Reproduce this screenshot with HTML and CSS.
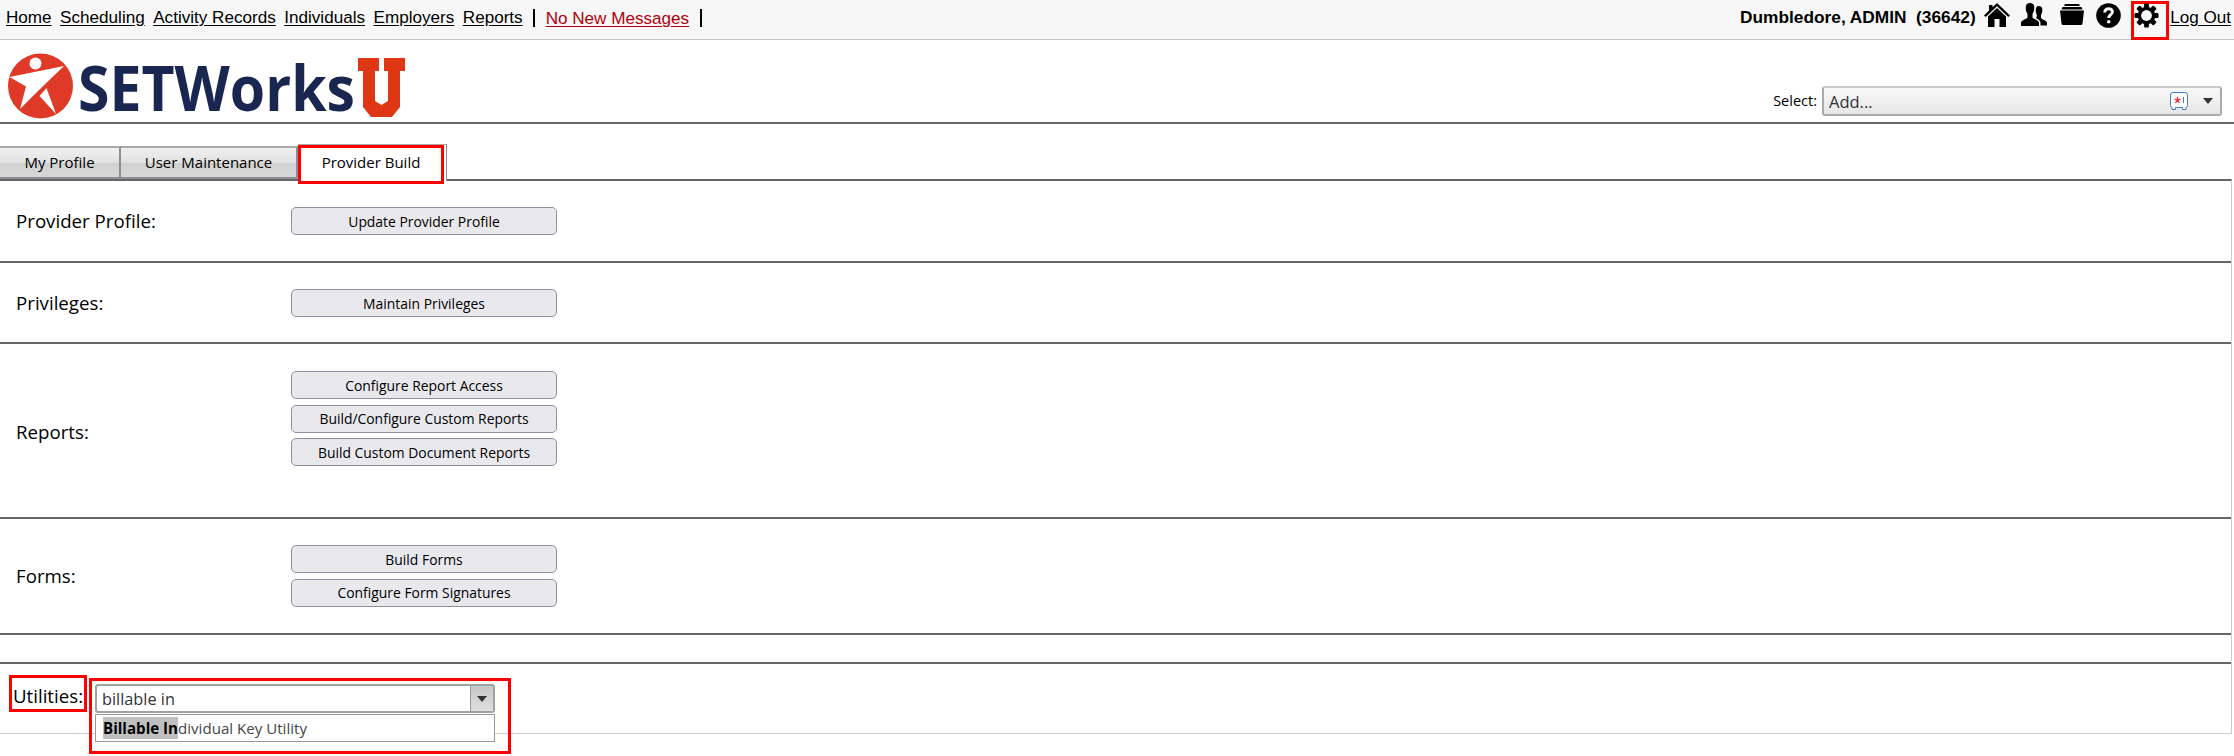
FILE: index.html
```html
<!DOCTYPE html>
<html lang="en">
  <head>
    <meta charset="UTF-8" />
    <meta name="viewport" content="width=device-width, initial-scale=1.0" />
    <title>Provider Build</title>
    <link rel="stylesheet" href="styles.css">
  </head>
  <body>
    <header class="topbar">
      <nav class="nav">
        <a href="#">Home</a>
        <a href="#">Scheduling</a>
        <a href="#">Activity Records</a>
        <a href="#">Individuals</a>
        <a href="#">Employers</a>
        <a href="#">Reports</a>
        <span class="bar"></span>
        <a href="#" class="messages">No New Messages</a>
        <span class="bar"></span>
      </nav>
      <div class="user">
        <span class="user-name">Dumbledore, ADMIN&nbsp; (36642)</span>
        <span class="icons">
          <svg width="26" height="24" viewBox="0 0 26 24"><path d="M13 0 L26 12.5 L24.3 14 L13 3.3 L1.7 14 L0 12.5 L5 7.6 V2 H8.5 V4.3 Z M13 5 L22 13.5 V24 H15.5 V16 H10.5 V24 H4 V13.5 Z" /></svg>
          <svg width="26" height="24" viewBox="0 0 26 24"><path d="M9 0 C12.5 0 13.6 2.6 13.2 6 C13 8.5 12 10 11.5 11 V14.5 C13 16.5 18 17 18 20 V23 H0 V20 C0 17 5 16.5 6.5 14.5 V11 C6 10 5 8.5 4.8 6 C4.4 2.6 5.5 0 9 0 Z M17.5 3 C20.6 3 21.7 5 21.3 8 C21.1 10 20.4 11 20 12 V15 C21.5 17 26 17.5 26 20 V22.5 H19.5 V20 C19.5 17.5 16.5 16 15 15 C16 13.5 16 12.5 15.6 11.5 C14.5 9 14 3 17.5 3 Z" /></svg>
          <svg width="26" height="24" viewBox="0 0 26 24"><path d="M6 1 H20 L21 3 H5 Z M3.5 4 H22.5 L23.5 6.5 H2.500 Z M1 7.500 H25 L23.500 20.500 Q23.300 22 22 22 H4 Q2.700 22 2.500 20.500 Z" /></svg>
          <svg width="25" height="25" viewBox="0 0 25 25"><circle cx="12.5" cy="12.5" r="12.3" /><path class="question" d="M8.700 9.500 C8.700 4.300 16.600 4.600 16.400 9 C16.200 11.500 12.700 12 12.700 15" /><circle class="dot" cx="12.700" cy="18.800" r="1.800" /></svg>
        </span>
        <span class="gear">
          <svg width="25" height="25" viewBox="-13 -13 26 26">
            <rect x="-2.5" y="-12.5" width="5" height="25" rx="1" />
            <rect x="-2.5" y="-12.5" width="5" height="25" rx="1" transform="rotate(45)" />
            <rect x="-2.5" y="-12.5" width="5" height="25" rx="1" transform="rotate(90)" />
            <rect x="-2.5" y="-12.5" width="5" height="25" rx="1" transform="rotate(135)" />
            <circle r="9.2" />
            <circle class="hole" r="5.6" />
          </svg>
        </span>
        <a href="#">Log Out</a>
      </div>
    </header>

    <div class="brand">
      <svg class="logo" width="400" height="70" viewBox="0 0 400 70">
        <circle class="logo-red" cx="32.5" cy="33" r="32.5" />
        <path class="logo-white" d="M56 13 L1.5 24 L18 33.5 L12 56 L31 37 Z M38.5 35 L31.5 43 L48 61 Z" />
        <circle class="logo-white" cx="27.5" cy="10.5" r="6" />
        <text class="logo-text" x="70" y="57.5" textLength="277" lengthAdjust="spacingAndGlyphs">SETWorks</text>
        <path class="logo-u" d="M350 5 H371 V18 H367 V48 L373.5 52 L380 48 V18 H376 V5 H397 V18 H392 V54 L384 64 H363 L355 54 V18 H350 Z" />
      </svg>
      <label class="select-area">
        <span>Select:</span>
        <span class="add-select">
          <span>Add...</span>
          <svg width="18" height="18" viewBox="0 0 18 18"><path class="pass" d="M3 .5 H15 Q17.500 .5 17.500 3 V13.500 Q17.500 15.500 16 15.500 V17.500 H12.500 V15.500 H5.500 V17.500 H2 V15.500 Q.5 15.500 .5 13.500 V3 Q.5 .5 3 .5 Z" /><path class="star" d="M7.500 4.700 V8 M4.300 7 L7.500 8 L10.700 7 M5.500 11 L7.500 8 L9.500 11" /><path class="pass" d="M13.500 5 V11" /></svg>
          <i class="arrow"></i>
        </span>
      </label>
    </div>

    <div class="tabs">
      <a class="tab tab-profile">My Profile</a>
      <a class="tab tab-users">User Maintenance</a>
      <a class="tab active"><span>Provider Build</span></a>
    </div>

    <main class="panel">
      <section class="row row-profile">
        <h2>Provider Profile:</h2>
        <div class="buttons">
          <button>Update Provider Profile</button>
        </div>
      </section>
      <section class="row row-privileges">
        <h2>Privileges:</h2>
        <div class="buttons">
          <button>Maintain Privileges</button>
        </div>
      </section>
      <section class="row row-reports">
        <h2>Reports:</h2>
        <div class="buttons">
          <button>Configure Report Access</button>
          <button>Build/Configure Custom Reports</button>
          <button>Build Custom Document Reports</button>
        </div>
      </section>
      <section class="row row-forms">
        <h2>Forms:</h2>
        <div class="buttons">
          <button>Build Forms</button>
          <button>Configure Form Signatures</button>
        </div>
      </section>
      <section class="row row-empty"></section>
      <section class="utilities">
        <h2>Utilities:</h2>
        <div class="combo-mark">
          <div class="combo">
            <span class="combo-text">billable in</span>
            <span class="combo-btn"><i class="arrow"></i></span>
          </div>
          <div class="combo-list"><span><b>Billable In</b>dividual Key Utility</span></div>
        </div>
      </section>
    </main>
  </body>
</html>
```
FILE: styles.css
```css
* {
  box-sizing: border-box;
}
body {
  margin: 0;
  height: 756px;
  overflow: hidden;
  background-color: white;
  color: black;
  font-family: "Open Sans", sans-serif;
}
a {
  color: black;
}
svg {
  display: block;
}
.topbar {
  display: flex;
  justify-content: space-between;
  height: 40px;
  background-color: #f7f7f7;
  border-bottom: 1px solid #c8c8c8;
  font-family: "Liberation Sans", Arial, sans-serif;
  font-size: 17.1px;
  white-space: nowrap;
}
.nav {
  display: flex;
  align-items: flex-start;
  gap: 8.5px;
  padding: 8px 0 0 6px;
  line-height: 19px;
}
.nav a,
.user > a {
  text-underline-offset: 2px;
}
.bar {
  width: 2px;
  height: 18px;
  margin: 1px 2px 0 2px;
  background-color: black;
}
.nav .messages {
  color: #b0000c;
  padding-top: 1px;
}
.user {
  display: flex;
  align-items: flex-start;
  line-height: 19px;
}
.user-name {
  padding-top: 8px;
  font-size: 17.3px;
  font-weight: bold;
}
.icons {
  display: flex;
  gap: 11.5px;
  padding: 3px 0 0 8px;
}
.question {
  fill: none;
  stroke: #f7f7f7;
  stroke-width: 3;
}
.dot,
.hole {
  fill: #f7f7f7;
}
.gear {
  width: 38px;
  height: 39px;
  margin: 1px 1px 0 10px;
  border: 3px solid red;
}
.gear svg {
  margin-top: -1px;
}
.user > a {
  padding: 8px 3px 0 0;
}
.brand {
  display: flex;
  justify-content: space-between;
  height: 84px;
  padding: 13px 12px 0 8px;
  border-bottom: 2px solid #666;
}
.logo {
  overflow: visible;
}
.logo-red {
  fill: #df3a27;
}
.logo-white {
  fill: white;
}
.logo-u {
  fill: #df3715;
}
.logo-text {
  fill: #182650;
  font-family: "Open Sans", sans-serif;
  font-size: 62px;
  font-weight: 700;
}
.select-area {
  display: flex;
  align-items: center;
  gap: 5px;
  height: 30px;
  margin-top: 33px;
  font-size: 14.5px;
}
.select-area > span:first-child {
  margin-top: -2px;
}
.add-select {
  display: flex;
  align-items: center;
  width: 400px;
  height: 30px;
  padding: 0 7px 0 5px;
  border: 2px solid #aaa;
  border-top-color: #c9c9c9;
  border-radius: 3px;
  background: linear-gradient(#f9f9f9, #e6e6e6);
  color: #333;
  font-size: 16.5px;
}
.add-select svg {
  margin-left: auto;
  margin-right: 15px;
}
.pass {
  fill: white;
  stroke: #3b82c4;
}
.star {
  fill: none;
  stroke: #e3323c;
  stroke-width: 1.3;
}
.arrow {
  border: 5px solid transparent;
  border-top: 6px solid #333;
  border-bottom: 0;
}
.tabs {
  display: flex;
  align-items: flex-end;
  height: 55px;
}
.tab {
  display: flex;
  align-items: center;
  justify-content: center;
  height: 33px;
  padding-bottom: 2px;
  border: 2px solid #8b8d94;
  border-left: 0;
  border-top-color: #aaa;
  background: linear-gradient(#f0f0f0 0%, #e2e2e2 50%, #d0d0d0 51%, #d8d8d8 100%);
  font-size: 15px;
}
.tab-profile {
  width: 121px;
}
.tab-users {
  width: 177px;
}
.active {
  width: 149px;
  height: 37px;
  margin-bottom: -2px;
  align-items: flex-start;
  justify-content: flex-start;
  border-width: 1px;
  border-bottom: 0;
  background: white;
}
.active span {
  width: 146px;
  height: 39px;
  flex: none;
  border: 3px solid red;
  text-align: center;
  line-height: 29px;
}
.panel {
  width: 2232px;
  height: 555px;
  border-top: 2px solid #666;
  border-right: 1px solid #ccc;
  border-bottom: 1px solid #ccc;
}
.row {
  display: flex;
  align-items: flex-start;
  border-bottom: 2px solid #666;
  padding-left: 16px;
}
h2 {
  width: 275px;
  margin: 0;
  font-size: 18.7px;
  font-weight: normal;
  line-height: 28px;
  white-space: nowrap;
}
.buttons {
  display: flex;
  flex-direction: column;
  gap: 5.6px;
}
button {
  width: 266px;
  height: 28px;
  padding: 0;
  border: 1px solid #8f8f9d;
  border-radius: 5px;
  background-color: #e9e9ed;
  color: black;
  font-family: inherit;
  font-size: 13.9px;
}
.row-profile {
  height: 82px;
  padding-top: 26px;
}
.row-privileges {
  height: 81px;
  padding-top: 26px;
}
.row-reports {
  height: 175px;
  padding-top: 27px;
}
.row-reports h2 {
  margin-top: 47px;
}
.row-forms {
  height: 116px;
  padding-top: 26px;
}
.row-forms h2 {
  margin-top: 17px;
}
.row-empty {
  height: 29px;
}
.utilities {
  display: flex;
  align-items: flex-start;
  gap: 2px;
  padding: 11px 0 0 9px;
}
.utilities h2 {
  width: 78px;
  height: 37px;
  border: 3px solid red;
  text-align: center;
  line-height: 36px;
}
.combo-mark {
  width: 422px;
  height: 76px;
  margin-top: 3px;
  padding: 3px;
  border: 3px solid red;
}
.combo {
  display: flex;
  width: 400px;
  height: 29px;
  border: 2px solid #a0a4a0;
  border-radius: 3px;
  color: #333;
  font-size: 16.3px;
}
.combo-text {
  flex: 1;
  padding-left: 5px;
  line-height: 27px;
}
.combo-btn {
  display: flex;
  align-items: center;
  justify-content: center;
  width: 23px;
  border-left: 1px solid #999;
  background: linear-gradient(#c8c8c8, #dedede);
}
.combo-list {
  width: 400px;
  height: 28px;
  margin-top: 1px;
  padding: 2px 7px;
  border: 1px solid #999;
  background-color: white;
  color: #444;
  font-size: 15.1px;
  line-height: 22px;
}
.combo-list b {
  display: inline-block;
  background-color: #c0c0c0;
  color: black;
}
```
